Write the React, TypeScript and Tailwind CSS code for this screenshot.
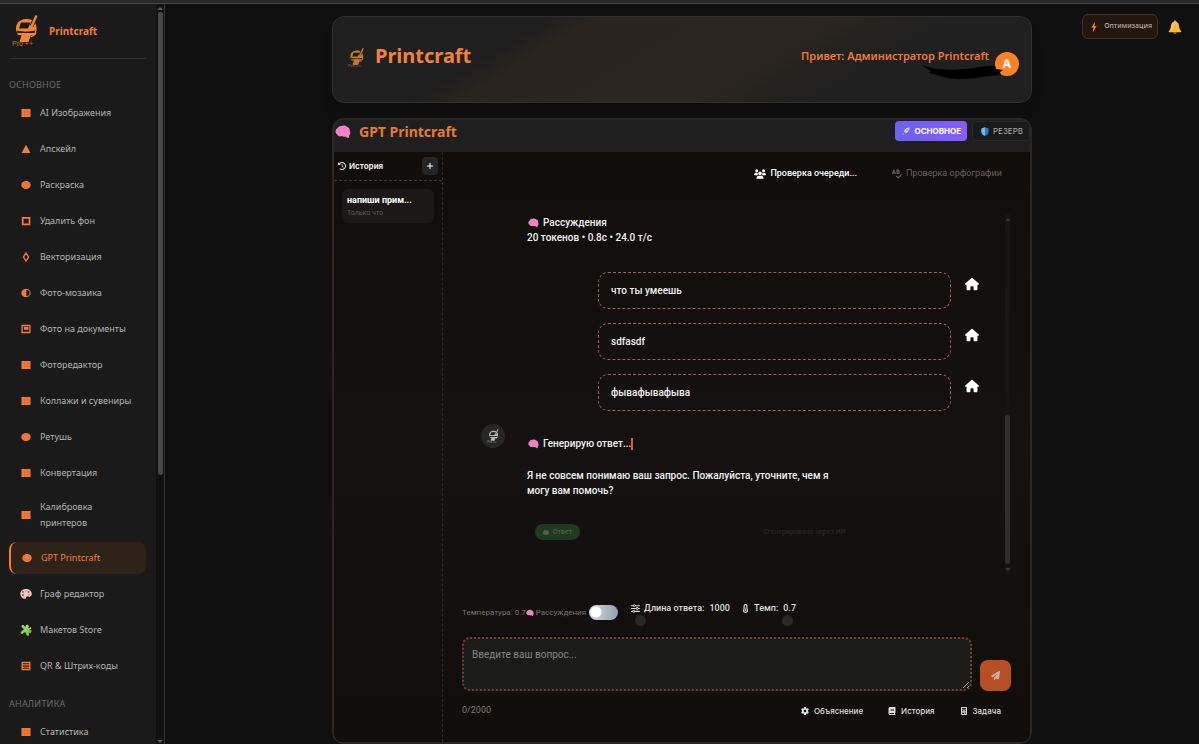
import { useState } from "react";
import type { ReactNode } from "react";
import {
  FaBook,
  FaCalculator,
  FaClockRotateLeft,
  FaGear,
  FaHouse,
  FaPaperPlane,
  FaPlus,
  FaSliders,
  FaSpellCheck,
  FaTemperatureHalf,
  FaUsers,
} from "react-icons/fa6";

type IconKind =
  | "grid"
  | "triangle"
  | "circle"
  | "square"
  | "diamond"
  | "half"
  | "frame"
  | "rows"
  | "palette"
  | "puzzle";

interface NavItem {
  label: string;
  icon: IconKind;
}

const mainNav: NavItem[] = [
  { label: "AI Изображения", icon: "grid" },
  { label: "Апскейл", icon: "triangle" },
  { label: "Раскраска", icon: "circle" },
  { label: "Удалить фон", icon: "square" },
  { label: "Векторизация", icon: "diamond" },
  { label: "Фото-мозаика", icon: "half" },
  { label: "Фото на документы", icon: "frame" },
  { label: "Фоторедактор", icon: "grid" },
  { label: "Коллажи и сувениры", icon: "grid" },
  { label: "Ретушь", icon: "circle" },
  { label: "Конвертация", icon: "grid" },
  { label: "Калибровка принтеров", icon: "grid" },
  { label: "GPT Printcraft", icon: "circle" },
  { label: "Граф редактор", icon: "palette" },
  { label: "Макетов Store", icon: "puzzle" },
  { label: "QR & Штрих-коды", icon: "rows" },
];

const analyticsNav: NavItem[] = [{ label: "Статистика", icon: "grid" }];

const userMessages = ["что ты умеешь", "sdfasdf", "фывафывафыва"];

const shapes: Record<IconKind, ReactNode> = {
  grid: (
    <>
      <rect x="1.5" y="2" width="9" height="8" fill="#f97b35" />
      <path d="M4.5 2v8M7.5 2v8M1.5 4.7h9M1.5 7.4h9" stroke="#d9652a" strokeWidth=".5" />
    </>
  ),
  triangle: <path d="M6 1.8 10.4 10H1.6z" fill="#f97b35" />,
  circle: (
    <>
      <ellipse cx="6" cy="6" rx="4.7" ry="4" fill="#f97b35" />
      <ellipse cx="6" cy="6" rx="2.8" ry="2.3" fill="none" stroke="#d9652a" strokeWidth=".6" />
    </>
  ),
  square: <path d="M2.7 2.9h6.8v6.4H2.7z" fill="none" stroke="#f97b35" strokeWidth="1.7" />,
  diamond: <path d="M6 2 8.5 6 6 10 3.5 6z" fill="none" stroke="#f97b35" strokeWidth="1.4" />,
  half: (
    <>
      <ellipse cx="6" cy="6" rx="4.1" ry="3.6" fill="none" stroke="#f97b35" />
      <path d="M6.4 2.2C.2 2 .2 10 6.4 9.8z" fill="#f97b35" />
    </>
  ),
  frame: (
    <>
      <path d="M2.1 2.5h7.8v7H2.1z" fill="none" stroke="#f97b35" strokeWidth="1.3" />
      <path d="M4 4h4.500v2.800H4z" fill="#f97b35" />
    </>
  ),
  rows: (
    <>
      <path d="M2.2 2.5h7.6v7H2.2z" fill="none" stroke="#f97b35" strokeWidth="1.3" />
      <path d="M2 4.9h8M2 7.2h8" stroke="#f97b35" strokeWidth="1.1" />
    </>
  ),
  palette: (
    <>
      <path
        d="M6 1C2.8 1 .3 3 .3 5.9c0 2.6 2 4.7 4.5 4.9 1.3.1 1-1.2 1.5-1.9.8-1 2.4.4 4-.4 1-.5 1.4-1.5 1.4-2.8C11.7 2.8 9.2 1 6 1z"
        fill="#f6c9c4"
      />
      <circle cx="3" cy="4" r="1" fill="#d9484f" />
      <circle cx="5.8" cy="2.9" r="1" fill="#eb8b9c" />
      <circle cx="8.6" cy="4" r="1" fill="#b2485f" />
      <circle cx="3" cy="7" r="1" fill="#8a5a68" />
      <circle cx="9" cy="6.8" r=".8" fill="#eb6e62" />
    </>
  ),
  puzzle: (
    <g transform="rotate(18 6 6)">
      <path d="M2.6 3h6.8v6.4H2.6z" fill="#8ed15b" />
      <circle cx="6" cy="2.1" r="1.6" fill="#a8e070" />
      <circle cx="10.2" cy="6.1" r="1.6" fill="#6fbb4a" />
      <circle cx="3" cy="9.7" r="1.3" fill="#8ed15b" />
      <circle cx="9" cy="9.7" r="1.3" fill="#8ed15b" />
      <circle cx="1.9" cy="3.6" r="1.4" fill="#a8e070" />
      <circle cx="9.6" cy="3" r="1" fill="#a8e070" />
      <circle cx="2.8" cy="6.4" r=".9" fill="#1a1a1a" />
      <circle cx="6" cy="9.3" r=".9" fill="#1a1a1a" />
    </g>
  ),
};

function NavIcon({ kind }: { kind: IconKind }) {
  return (
    <svg viewBox="0 0 12 12" className="size-3 shrink-0" aria-hidden="true">
      {shapes[kind]}
    </svg>
  );
}

// Printer mark with a brush sticking out of the top right corner
function PrinterLogo({ className, color = "#ee8a27" }: { className?: string; color?: string }) {
  return (
    <svg viewBox="0 0 28 32" className={className} aria-hidden="true">
      <path d="M15 4C8 4 4.500 9 5 15l2 5h16c3-3 3.500-8 1-12l-3-3c-2-1-4-1-6-1z" fill={color} />
      <path d="M10 7.500h9.500l-2.500 6H8z" fill="#1a1a1a" />
      <path d="M6 15.500c5 1.500 12 1.500 18 0l-.5 2.500H6.500z" fill="#1a1a1a" />
      <path d="M11 18.500h9.500L17.500 27H8.500z" fill={color} />
      <path d="M20 21.500c2.500-.5 4-2 5-4" fill="none" stroke={color} strokeWidth="1.500" />
      <path d="M25.500 1 20.500 11" stroke="#1a1a1a" strokeWidth="4" />
      <path d="M25.500.5 20.500 11.500" stroke={color} strokeWidth="2.400" />
      <text x="1" y="31" fontSize="7" fontFamily="Liberation Sans, sans-serif" fill={color} opacity=".8">
        Pro ++
      </text>
    </svg>
  );
}

function Brain({ className }: { className?: string }) {
  return (
    <svg viewBox="0 0 16 14" className={className} aria-hidden="true">
      <path
        d="M2.500 3.200C3.500 1.400 5 .8 6.500 1c2-1 4.300-.5 5.300.8 2 .4 3.200 2 3 4 1 1.700.5 3.700-.6 4.800l-.2 1.900-1.600.6-1.700-1.600c-2 .6-3.200 0-4-.4-2 .7-3.700 0-4.200-1.300C.5 8.900 0 6.500.9 5.300.9 4.300 1.600 3.500 2.500 3.200z"
        fill="#f583c6"
      />
      <path
        d="M4 4c1.500-.8 2.500 0 3 1M8 2.500c.3 1.500 1.300 2 2.500 1.800M3 7c1.500-.4 2.700.2 3 1.500M8.500 6.500c1-.6 2.700-.3 3.200 1M12 5l1.500 1"
        fill="none"
        stroke="#e268b4"
        strokeWidth=".7"
      />
    </svg>
  );
}

function SidebarSection({ title, items, active, onSelect }: {
  title: string;
  items: NavItem[];
  active: string;
  onSelect: (label: string) => void;
}) {
  return (
    <section>
      <h2 className="text-[9px] leading-4 tracking-wide text-[#6b6b6b] uppercase">{title}</h2>
      <ul className="mt-1 flex flex-col gap-1">
        {items.map((item) => (
          <li key={item.label}>
            <a
              href="#"
              onClick={() => onSelect(item.label)}
              className={`flex min-h-8 items-center gap-2 rounded-lg pt-[6px] pr-6 pb-[7px] text-[9px] leading-4 ${
                item.label === active
                  ? "border-l-2 border-[#f97b35] bg-[#2e2219] pl-[10px] text-[#f57f35]"
                  : "pl-[11px] text-[#b3b3b3]"
              }`}
            >
              <NavIcon kind={item.icon} />
              <span className={item.label.length > 18 ? "" : "whitespace-nowrap"}>{item.label}</span>
            </a>
          </li>
        ))}
      </ul>
    </section>
  );
}

function Sidebar() {
  const [active, setActive] = useState("GPT Printcraft");

  return (
    <aside className="flex w-[165px] shrink-0 border-r border-[#343434] bg-[#1a1a1a]">
      <div className="min-w-0 flex-1 overflow-hidden pr-[10px] pl-[9px]">
        <div className="flex h-[55px] items-center gap-2 border-b border-[#303030]">
          <PrinterLogo className="h-8 w-8" />
          <span className="text-[10px] font-bold text-[#f97b35]">Printcraft</span>
        </div>
        <nav className="flex flex-col gap-[14px] pt-[18px]">
          <SidebarSection title="Основное" items={mainNav} active={active} onSelect={setActive} />
          <SidebarSection title="Аналитика" items={analyticsNav} active={active} onSelect={setActive} />
        </nav>
      </div>
      <div className="flex w-2 flex-col items-center bg-[#101010] pt-[2px]">
        <svg viewBox="0 0 6 5" className="mb-px h-[5px] w-[6px]" aria-hidden="true">
          <path d="M3 1 6 4H0z" fill="#5a5a5a" />
        </svg>
        <div className="h-[463px] w-[5px] rounded-full bg-[#484848]" />
        <svg viewBox="0 0 6 5" className="mt-auto h-[5px] w-[6px]" aria-hidden="true">
          <path d="M3 4 6 1H0z" fill="#5a5a5a" />
        </svg>
      </div>
    </aside>
  );
}

function PageHeader() {
  return (
    <header className="flex h-[87px] items-center justify-between rounded-xl border border-[#303030] bg-[linear-gradient(149deg,#1f1f1f_26%,#29241e_32%,#2a251e_60%,#202020_73%)] pr-3 pl-[14px] shadow-lg">
      <div className="flex items-center gap-[10px] pb-2">
        <PrinterLogo className="mt-1 h-5 w-[18px]" color="#c87a22" />
        <h1 className="text-[20px] leading-7 font-bold text-[#f58038]">Printcraft</h1>
      </div>
      <div className="relative flex items-center gap-[6px]">
        <span className="pb-[6px] text-[11px] font-semibold text-[#ef7a35]">Привет: Администратор Printcraft</span>
        <span className="mt-2 flex size-6 items-center justify-center rounded-full bg-[#ff8126] text-xs font-bold text-white">
          A
        </span>
        <svg viewBox="0 0 82 16" className="absolute right-4 -bottom-1 h-4 w-[82px]" aria-hidden="true">
          <path
            d="M0 1c5 1 10 3 16 4 10 1 25 1 36-1 9-1 15-3 22-2l1 3 7 1-3 2 1 3c-8 1-17 1-25 3-8 1-20 2-29 0-7-2-11-3-18-5l2-2C6 5 4 3 0 1z"
            fill="#000"
          />
        </svg>
      </div>
    </header>
  );
}

function HistoryPanel() {
  return (
    <div className="w-[109px] shrink-0 border-r border-dashed border-[#2c2826]">
      <div className="flex h-[29px] items-center justify-between border-b border-dashed border-[#3b3633] px-1">
        <h3 className="flex items-center gap-[3px] font-[Inter,sans-serif] text-[8px] font-bold text-[#e5e5e5]">
          <FaClockRotateLeft className="size-2" />
          История
        </h3>
        <button type="button" aria-label="Новый чат" className="flex h-[18px] w-4 items-center justify-center rounded bg-[#252525] text-white">
          <FaPlus className="size-2" />
        </button>
      </div>
      <button type="button" className="mx-2 mt-2 block w-[92px] rounded-md bg-[#1c1817] px-[5px] py-1 text-left">
        <span className="block text-[9px] leading-[14px] font-bold text-white">напиши прим...</span>
        <span className="block text-[7px] leading-3 text-[#5e5a58]">Только что</span>
      </button>
    </div>
  );
}

function Messages() {
  return (
    <div className="mt-5 flex h-[359px] pr-5 pl-[38px]">
      <div className="min-w-0 flex-1 text-[10px] leading-[15px] font-medium text-[#f1f1f1]">
        <div className="pl-[46px]">
          <p className="flex items-center gap-1">
            <Brain className="ml-px h-[10px] w-[11px]" />
            Рассуждения
          </p>
          <p>20 токенов • 0.8с • 24.0 т/с</p>
        </div>
        <ul className="mt-[27px] flex flex-col gap-[14px]">
          {userMessages.map((message) => (
            <li key={message} className="flex items-start justify-end gap-[14px] pr-[26px]">
              <p className="h-[37px] w-[353px] rounded-[10px] border border-dashed border-[#a9594a] px-3 py-[10px]">
                {message}
              </p>
              <FaHouse className="mt-[5px] size-[14px] text-white" />
            </li>
          ))}
        </ul>
        <div className="mt-[13px] flex gap-[22px]">
          <span className="flex size-6 items-center justify-center rounded-full bg-[#262725]">
            <PrinterLogo className="size-[14px]" color="#b7b7b3" />
          </span>
          <div className="pt-[14px]">
            <p className="flex items-center gap-1">
              <Brain className="ml-px h-[10px] w-[11px]" />
              <span className="border-r-2 border-[#c95f3b] leading-3">Генерирую ответ...</span>
            </p>
            <p className="mt-[18px] w-[320px]">
              Я не совсем понимаю ваш запрос. Пожалуйста, уточните, чем я могу вам помочь?
            </p>
            <div className="mt-[26px] flex items-center pl-2 text-[7px]">
              <button type="button" className="flex h-4 w-[45px] items-center justify-center gap-1 rounded-lg bg-[#1f3a1e] text-[#47644a]">
                <span className="h-[5px] w-[6px] rounded-sm bg-[#47644a]" />
                Ответ
              </button>
              <span className="ml-[183px] whitespace-nowrap text-[#2b2523]">Сгенерировано через ИИ</span>
            </div>
          </div>
        </div>
      </div>
      <div className="flex w-[5px] flex-col items-center bg-[#171413] pt-[2px]">
        <svg viewBox="0 0 6 5" className="h-[5px] w-[6px]" aria-hidden="true">
          <path d="M3 1 6 4H0z" fill="#363433" />
        </svg>
        <div className="mt-auto h-[149px] w-[5px] rounded-full bg-[#302e2d]" />
        <svg viewBox="0 0 6 5" className="mt-[3px] mb-[2px] h-[5px] w-[6px]" aria-hidden="true">
          <path d="M3 4 6 1H0z" fill="#363433" />
        </svg>
      </div>
    </div>
  );
}

const rangeClass =
  "block h-[11px] appearance-none rounded-full bg-transparent [&::-webkit-slider-runnable-track]:h-[11px] [&::-webkit-slider-thumb]:size-[11px] [&::-webkit-slider-thumb]:appearance-none [&::-webkit-slider-thumb]:rounded-full [&::-webkit-slider-thumb]:bg-[#292827]";

function Composer() {
  const [question, setQuestion] = useState("");
  const [length, setLength] = useState(1000);
  const [temperature, setTemperature] = useState(0.7);
  const [reasoning, setReasoning] = useState(false);

  return (
    <div className="mt-[27px] px-[19px]">
      <div className="flex items-start">
        <label className="flex items-center pt-1 text-[8px] leading-[15px] text-[#77716e]">
          <span className="whitespace-nowrap">Температура: 0.7</span>
          <Brain className="mr-[2px] h-2 w-2" />
          Рассуждения
          <input
            type="checkbox"
            checked={reasoning}
            onChange={(e) => setReasoning(e.target.checked)}
            className="ml-[3px] h-[15px] w-[29px] appearance-none rounded-full bg-[radial-gradient(circle_at_7px_7px,#fff_5px,transparent_6px),linear-gradient(90deg,#d5dae2,#949fae)] checked:bg-[#f97b35]"
          />
        </label>
        <div className="ml-[13px] w-[110px] text-[9px] leading-[14px] font-medium text-[#ddd]">
          <label htmlFor="length" className="flex items-center gap-1 whitespace-nowrap">
            <FaSliders className="size-[9px]" />
            Длина ответа:
            <span className="ml-px">{length}</span>
          </label>
          <input
            id="length"
            type="range"
            min={1000}
            max={4000}
            value={length}
            onChange={(e) => setLength(Number(e.target.value))}
            className={`${rangeClass} ml-1 w-[100px]`}
          />
        </div>
        <div className="w-[128px] text-[9px] leading-[14px] font-medium text-[#ddd]">
          <label htmlFor="temperature" className="flex items-center gap-1">
            <FaTemperatureHalf className="size-[9px]" />
            Темп:
            <span className="ml-px">{temperature}</span>
          </label>
          <input
            id="temperature"
            type="range"
            min={0}
            max={2}
            step={0.1}
            value={temperature}
            onChange={(e) => setTemperature(Number(e.target.value))}
            className={`${rangeClass} w-full`}
          />
        </div>
      </div>
      <div className="mt-[11px] flex items-end gap-2">
        <textarea
          aria-label="Вопрос"
          placeholder="Введите ваш вопрос..."
          maxLength={2000}
          value={question}
          onChange={(e) => setQuestion(e.target.value)}
          className="h-[54px] min-w-0 flex-1 rounded-lg border-2 border-dotted border-[#7c392c] bg-[#1b1b1a] px-2 py-2 text-[10px] leading-[15px] text-white placeholder:text-[#858585]"
        />
        <button type="button" aria-label="Отправить" className="flex h-[31px] w-[31px] items-center justify-center rounded-lg bg-[#b64f22] text-[#c9b3a8]">
          <FaPaperPlane className="size-[9px]" />
        </button>
      </div>
      <div className="mt-3 flex items-center justify-between pr-[10px]">
        <span className="text-[9px] text-[#7b7774]">{question.length}/2000</span>
        <div className="flex gap-[25px] font-[Inter,sans-serif] text-[8px] leading-4 font-medium text-[#dedede]">
          <button type="button" className="flex items-center gap-[5px]"><FaGear className="size-2" />Объяснение</button>
          <button type="button" className="flex items-center gap-[5px]"><FaBook className="size-2" />История</button>
          <button type="button" className="flex items-center gap-[5px]"><FaCalculator className="size-2" />Задача</button>
        </div>
      </div>
    </div>
  );
}

function ChatCard() {
  return (
    <main className="flex flex-1 flex-col rounded-xl border-2 border-[#2a2725] bg-[#1f1f1f]">
      <div className="flex h-8 items-start justify-between pl-[1px]">
        <h2 className="flex items-center gap-2 text-[14px] leading-6 font-bold text-[#e67b2e]">
          <Brain className="h-[14px] w-4" />
          GPT Printcraft
        </h2>
        <div className="flex gap-[5px] pt-px font-[Inter,sans-serif] text-[8px] leading-[18px]">
          <button type="button" className="flex items-center gap-1 rounded bg-linear-to-r from-[#6862f2] to-[#875cf6] px-[6px] font-bold text-white">
            <svg viewBox="0 0 9 9" className="size-[9px]" aria-hidden="true">
              <path d="M8.500.5C5.500.5 4 2 2.800 4.200l2 2C7 5 8.500 3.500 8.500.5z" fill="#ded8ea" />
              <path d="m3.500 3-2.500 1 1.500 1zM6 5.500l-1 2.500-1-1.500z" fill="#e8505f" />
              <path d="M2.500 6 1 8l2-1z" fill="#f6a13a" />
              <circle cx="6" cy="3" r=".9" fill="#53a3de" />
            </svg>
            ОСНОВНОЕ
          </button>
          <button type="button" className="flex items-center gap-1 rounded border border-[#292929] bg-[#1a1a1a] pr-[6px] pl-2 text-[#aaa]">
            <svg viewBox="0 0 9 10" className="h-[9px] w-2" aria-hidden="true">
              <path d="M4.500.3 8.500 1.500v4C8.500 7.500 6.500 9.200 4.500 9.800 2.500 9.200.5 7.500.5 5.500v-4z" fill="#3579bd" />
              <path d="M4.500.3v9.500C2.500 9.200.5 7.500.5 5.500v-4z" fill="#72b9ee" />
            </svg>
            РЕЗЕРВ
          </button>
        </div>
      </div>
      <div className="flex flex-1 rounded-b-lg bg-linear-to-b from-[#110d0b] via-[#141110] to-[#100d0b] font-[Roboto,sans-serif]">
        <HistoryPanel />
        <div className="min-w-0 flex-1">
          <div className="flex h-[43px] items-center justify-end gap-[35px] pr-7 text-[9px]">
            <span className="flex items-center gap-1 font-medium text-white">
              <FaUsers className="size-3" />
              Проверка очереди...
            </span>
            <button type="button" className="flex items-center gap-1 text-[#655f5c]">
              <FaSpellCheck className="size-[10px]" />
              Проверка орфографии
            </button>
          </div>
          <Messages />
          <Composer />
        </div>
      </div>
    </main>
  );
}

export default function App() {
  return (
    <div className="flex h-screen flex-col overflow-hidden bg-[#0f0f0f] font-['Noto_Sans',sans-serif]">
      <div className="h-1 shrink-0 border-b border-[#4a4a4a] bg-[#292929]" />
      <div className="flex min-h-0 flex-1">
        <Sidebar />
        <div className="grid min-w-0 flex-1 grid-cols-[1fr_minmax(0,700px)_1fr]">
          <div className="col-start-2 flex flex-col gap-[15px] pt-3">
            <PageHeader />
            <ChatCard />
          </div>
          <div className="flex items-start justify-end gap-[10px] pt-[10px] pr-[17px]">
            <button type="button" className="flex h-[25px] items-center gap-1 rounded-md border border-[#4a2f1c] bg-[#21170f] px-[5px] text-[7px] font-medium text-[#b9aaa0]">
              <svg viewBox="0 0 12 12" className="size-3" aria-hidden="true">
                <path d="M7 .8 3.500 6.500h2L4.800 11.200 8.500 5.200h-2z" fill="#f98348" />
              </svg>
              Оптимизация
            </button>
            <button type="button" aria-label="Уведомления" className="pt-[6px]">
              <svg viewBox="0 0 14 14" className="size-[14px]" aria-hidden="true">
                <path d="M7 .5c.8 0 1.300.5 1.300 1.200C10.500 2.500 11 4.500 11.200 7c.2 2 1 2.800 2 4.300v1H.8v-1c1-1.500 1.800-2.300 2-4.300C3 4.500 3.500 2.500 5.700 1.700 5.700 1 6.200.5 7 .5z" fill="#fbb836" />
                <path d="M5.500 3C4.300 4 4.500 7 3.500 10" fill="none" stroke="#ffdc74" strokeWidth="1" />
                <path d="M5.300 12.300h3.400c-.2 2-3.200 2-3.400 0z" fill="#c27b27" />
              </svg>
            </button>
          </div>
        </div>
      </div>
    </div>
  );
}
